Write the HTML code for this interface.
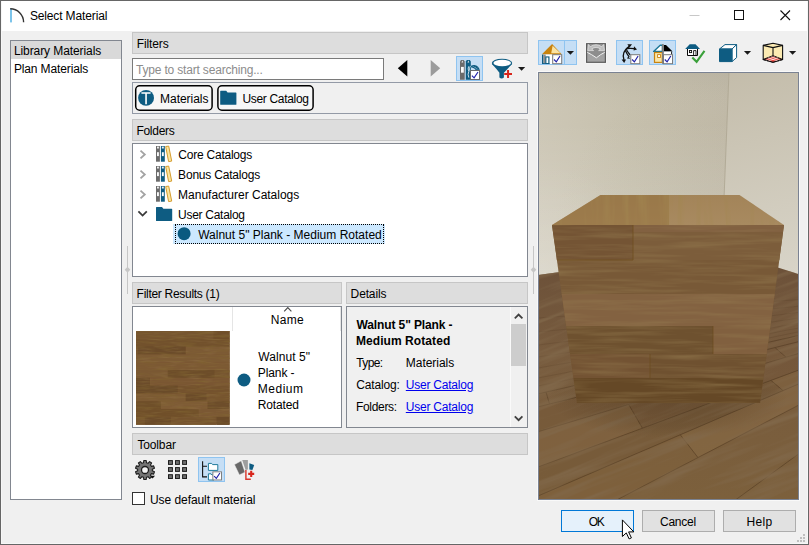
<!DOCTYPE html>
<html lang="en">
<head>
<meta charset="utf-8">
<title>Select Material</title>
<style>
html,body{margin:0;padding:0;}
body{width:809px;height:545px;overflow:hidden;position:relative;background:#f0f0f0;font-family:"Liberation Sans",sans-serif;font-size:12px;color:#000;}
.a{position:absolute;box-sizing:border-box;}
.t{position:absolute;white-space:nowrap;line-height:16px;font-size:12px;}
.hdr{background:#dddddd;border:1px solid #c6c6c6;height:22px;}
.box{background:#fff;border:1px solid #828790;}
.btn{background:#e1e1e1;border:1px solid #adadad;height:22px;width:73px;}
.tog{background:#c5def5;border:1px solid #8fc4f0;}
svg{position:absolute;overflow:visible;}
</style>
</head>
<body>
<!-- title bar -->
<div class="a" style="left:0;top:0;width:809px;height:31px;background:#fff;"></div>
<!-- left list -->
<div class="a box" style="left:10px;top:40px;width:112px;height:460px;"></div>
<div class="a" style="left:11px;top:41px;width:110px;height:18px;background:#d9d9d9;"></div>
<!-- headers -->
<div class="a hdr" style="left:132px;top:32px;width:396px;"></div>
<div class="a hdr" style="left:132px;top:119px;width:396px;"></div>
<div class="a hdr" style="left:132px;top:282px;width:210px;"></div>
<div class="a hdr" style="left:346px;top:282px;width:182px;"></div>
<div class="a hdr" style="left:132px;top:433px;width:396px;"></div>
<!-- search -->
<div class="a" style="left:132px;top:58px;width:252px;height:22px;background:#fff;border:1px solid #7a7a7a;"></div>
<!-- chips panel -->
<div class="a" style="left:132px;top:82px;width:396px;height:32px;border:1px solid #939aa6;"></div>
<!-- tree box -->
<div class="a box" style="left:132px;top:143px;width:396px;height:134px;"></div>
<div class="a" style="left:173px;top:224px;width:211.5px;height:20px;background:#cce8ff;"></div>
<div class="a" style="left:174.5px;top:224px;width:209.5px;height:20px;border:1px dotted #000;"></div>
<!-- results box -->
<div class="a box" style="left:132px;top:306px;width:210px;height:122px;"></div>
<div class="a" style="left:232px;top:307px;width:1px;height:24px;background:#e5e5e5;"></div>
<div class="a" style="left:340px;top:307px;width:1px;height:24px;background:#e5e5e5;"></div>
<!-- details box -->
<div class="a" style="left:346px;top:306px;width:182px;height:122px;border:1px solid #828790;background:#f0f0f0;"></div>
<div class="a" style="left:510px;top:307px;width:1px;height:120px;background:#fafafa;"></div>
<div class="a" style="left:511px;top:324px;width:15px;height:42px;background:#cdcdcd;"></div>
<!-- toggles -->
<div class="a tog" style="left:456px;top:56px;width:27px;height:25px;"></div>
<div class="a tog" style="left:538px;top:40px;width:39px;height:25px;"></div>
<div class="a" style="left:564px;top:40px;width:1px;height:25px;background:#8fc4f0;"></div>
<div class="a tog" style="left:616px;top:40px;width:27px;height:25px;"></div>
<div class="a tog" style="left:649px;top:40px;width:27px;height:25px;"></div>
<div class="a tog" style="left:198px;top:457px;width:27px;height:25px;"></div>
<!-- checkbox -->
<div class="a" style="left:132px;top:492px;width:13px;height:13px;background:#fff;border:1px solid #333;"></div>
<!-- buttons -->
<div class="a btn" style="left:561px;top:510px;background:#e5f1fb;border-color:#0078d7;"></div>
<div class="a btn" style="left:642px;top:510px;"></div>
<div class="a btn" style="left:723px;top:510px;"></div>
<!-- preview -->
<svg style="left:537px;top:71px;" width="263" height="430" viewBox="537 71 263 430">
<rect x="537.5" y="71.5" width="262" height="429" fill="none" stroke="#f9f9f9" stroke-width="1"/>
<svg x="538" y="72" width="261" height="428" viewBox="538 72 261 428" style="overflow:hidden">
<defs>
<linearGradient id="lw" gradientUnits="userSpaceOnUse" x1="538" y1="0" x2="728" y2="0">
<stop offset="0" stop-color="#cdc7b6"/><stop offset="0.5" stop-color="#c6c0ad"/><stop offset="1" stop-color="#c1baa8"/>
</linearGradient>
<radialGradient id="lwd" gradientUnits="userSpaceOnUse" cx="715" cy="240" r="165">
<stop offset="0" stop-color="#8c8468" stop-opacity="0.08"/><stop offset="1" stop-color="#8c8468" stop-opacity="0"/>
</radialGradient>
<radialGradient id="lwl" gradientUnits="userSpaceOnUse" cx="538" cy="280" r="120">
<stop offset="0" stop-color="#ffffff" stop-opacity="0.12"/><stop offset="1" stop-color="#ffffff" stop-opacity="0"/>
</radialGradient>
<linearGradient id="rw" gradientUnits="userSpaceOnUse" x1="740" y1="72" x2="790" y2="275">
<stop offset="0" stop-color="#c4bdab"/><stop offset="1" stop-color="#d8d4c8"/>
</linearGradient>
<linearGradient id="fl" gradientUnits="userSpaceOnUse" x1="0" y1="250" x2="0" y2="500">
<stop offset="0" stop-color="#6a4f38"/><stop offset="0.4" stop-color="#775b3e"/><stop offset="1" stop-color="#7c603c"/>
</linearGradient>
<linearGradient id="tf" gradientUnits="userSpaceOnUse" x1="0" y1="195" x2="0" y2="225">
<stop offset="0" stop-color="#a38459"/><stop offset="1" stop-color="#a88a60"/>
</linearGradient>
<clipPath id="cf"><polygon points="552,225 784,225 760,403 577,403"/></clipPath>
<clipPath id="cfl"><polygon points="538,275 722,250 800,274.5 800,500 538,500"/></clipPath>
<radialGradient id="sh" gradientUnits="userSpaceOnUse" cx="668" cy="398" r="120" gradientTransform="translate(0 265.3) scale(1 0.3333)">
<stop offset="0" stop-color="#2a1a08" stop-opacity="0.22"/><stop offset="0.7" stop-color="#2a1a08" stop-opacity="0.1"/><stop offset="1" stop-color="#2a1a08" stop-opacity="0"/>
</radialGradient>
<filter id="gh" x="0" y="0" width="100%" height="100%"><feTurbulence type="fractalNoise" baseFrequency="0.012 0.2" numOctaves="3" seed="7"/><feColorMatrix type="matrix" values="0 0 0 0 0.3  0 0 0 0 0.2  0 0 0 0 0.08  1.2 0 0 0 -0.5"/></filter>
<filter id="gl" x="0" y="0" width="100%" height="100%"><feTurbulence type="fractalNoise" baseFrequency="0.01 0.16" numOctaves="2" seed="23"/><feColorMatrix type="matrix" values="0 0 0 0 0.78  0 0 0 0 0.62  0 0 0 0 0.36  2 0 0 0 -0.95"/></filter>
<filter id="gv" x="0" y="0" width="100%" height="100%"><feTurbulence type="fractalNoise" baseFrequency="0.16 0.012" numOctaves="3" seed="11"/><feColorMatrix type="matrix" values="0 0 0 0 0.36  0 0 0 0 0.24  0 0 0 0 0.08  1.4 0 0 0 -0.62"/></filter>
<filter id="gf" x="0" y="0" width="100%" height="100%"><feTurbulence type="fractalNoise" baseFrequency="0.01 0.14" numOctaves="3" seed="5"/><feColorMatrix type="matrix" values="0 0 0 0 0.22  0 0 0 0 0.14  0 0 0 0 0.07  2.4 0 0 0 -1.12"/></filter>
<clipPath id="ct"><polygon points="600.5,195 739.5,195 784,225 552,225"/></clipPath>
<linearGradient id="lwv" gradientUnits="userSpaceOnUse" x1="0" y1="72" x2="0" y2="275">
<stop offset="0" stop-color="#000" stop-opacity="0.035"/><stop offset="0.25" stop-color="#fff" stop-opacity="0"/><stop offset="1" stop-color="#fff" stop-opacity="0.24"/>
</linearGradient>
</defs>
<rect x="538" y="72" width="262" height="428" fill="#c6c0ae"/>
<polygon points="538,72 729,72 722,250 538,275" fill="url(#lw)"/>
<polygon points="538,72 729,72 722,250 538,275" fill="url(#lwd)"/>
<polygon points="538,72 729,72 722,250 538,275" fill="url(#lwl)"/>
<polygon points="538,72 729,72 722,250 538,275" fill="url(#lwv)"/>
<polygon points="729,72 800,72 800,274.5 722,250" fill="url(#rw)"/>
<line x1="729" y1="72" x2="722" y2="250" stroke="#aca590" stroke-width="0.8"/>
<!-- floor -->
<g clip-path="url(#cfl)">
<rect x="538" y="245" width="262" height="255" fill="url(#fl)"/>
<polygon points="538,431.8 628.7,404.5 642.4,428.2 538,467.0" fill="#8b6b43" opacity="0.28"/>
<polygon points="628.7,404.5 800,353.0 800,369.6 642.4,428.2" fill="#5f4528" opacity="0.12"/>
<polygon points="538,467.0 771,380.4 783,390.6 538,496.0" fill="#6a4d2e" opacity="0.18"/>
<polygon points="771,380.4 800,369.6 800,383.3 783,390.6" fill="#8b6b43" opacity="0.25"/>
<polygon points="538,496.0 680.3,434.8 698,457.6 538,541.0" fill="#85653d" opacity="0.2"/>
<polygon points="680.3,434.8 800,383.3 800,404.4 698,457.6" fill="#90704a" opacity="0.38"/>
<polygon points="538,406.9 775,347.6 786,357.2 538,431.8" fill="#694c2d" opacity="0.15"/>
<g fill="none" stroke="#46301a" stroke-width="0.9" opacity="0.5">
<path d="M538,393.8 L800,335.2"/>
<path d="M538,406.9 L800,341.3"/>
<path d="M538,431.8 L800,353.0"/>
<path d="M538,467.0 L800,369.6"/>
<path d="M538,496.0 L800,383.3"/>
<path d="M538,541.0 L800,404.4"/>
<path d="M538,644.0 L800,452.9"/>
<path d="M628.7,404.5 L642.4,428.2"/>
<path d="M680.3,434.8 L698,457.6"/>
<path d="M546,392.0 L549.5,404.0"/>
<path d="M771,380.4 L783,390.6"/>
<path d="M775,347.6 L786,357.2"/>
</g>
<g fill="none" stroke="#46301a" stroke-width="0.8" opacity="0.22">
<path d="M538,318.0 L800,299.5"/>
<path d="M538,332.0 L800,306.1"/>
<path d="M538,345.0 L800,312.2"/>
<path d="M538,357.0 L800,317.8"/>
<path d="M538,368.0 L800,323.0"/>
<path d="M538,378.0 L800,327.7"/>
<path d="M538,386.0 L800,331.5"/>
</g>
<g transform="rotate(-21 668 400)"><rect x="400" y="150" width="560" height="520" filter="url(#gf)"/></g>
<ellipse cx="668" cy="398" rx="120" ry="40" fill="url(#sh)"/>
</g>
<!-- cube top -->
<polygon points="600.5,195 739.5,195 784,225 552,225" fill="url(#tf)"/>
<polygon points="600.5,195 669,195 669,225 552,225" fill="#94713f" opacity="0.6"/>
<g clip-path="url(#ct)"><rect x="550" y="194" width="236" height="32" filter="url(#gv)"/></g>
<!-- cube front -->
<g clip-path="url(#cf)">
<rect x="550" y="225" width="236" height="180" fill="#785937"/>
<rect x="550" y="225" width="83" height="35" fill="#745434"/>
<rect x="633" y="225" width="153" height="7" fill="#826141"/>
<rect x="633" y="232" width="153" height="28" fill="#7c5d3b"/>
<rect x="550" y="294" width="236" height="32" fill="#836241"/>
<rect x="550" y="326" width="163" height="28" fill="#6e512f"/>
<rect x="713" y="326" width="80" height="28" fill="#81603f"/>
<rect x="550" y="354" width="100" height="24" fill="#735333"/>
<rect x="650" y="354" width="140" height="24" fill="#6f5130"/>
<rect x="550" y="378" width="236" height="26" fill="#654826"/>
<rect x="550" y="225" width="236" height="180" filter="url(#gh)"/>
<path d="M633 225V260H552" fill="none" stroke="#6f4f1e" stroke-width="0.8"/>
<path d="M713 326V354M650 354V378" fill="none" stroke="#6a4b1c" stroke-width="0.7"/>
</g>
<rect x="538.5" y="72.5" width="260" height="427" fill="none" stroke="#7a8292" stroke-width="1"/>
</svg>
</svg>

<!-- thumb -->
<svg style="left:136.2px;top:331.2px;" width="93.6" height="93.6" viewBox="0 0 94 94">
<defs><filter id="gr" x="0" y="0" width="100%" height="100%"><feTurbulence type="fractalNoise" baseFrequency="0.05 0.6" numOctaves="3" seed="4"/><feColorMatrix type="matrix" values="0 0 0 0 0.22  0 0 0 0 0.13  0 0 0 0 0.03  1.5 0 0 0 -0.66"/></filter>
<filter id="gr2" x="0" y="0" width="100%" height="100%"><feTurbulence type="fractalNoise" baseFrequency="0.06 0.5" numOctaves="2" seed="19"/><feColorMatrix type="matrix" values="0 0 0 0 0.66  0 0 0 0 0.5  0 0 0 0 0.25  2 0 0 0 -1"/></filter></defs>
<rect width="94" height="94" fill="#75532e"/>
<rect x="0" y="0.00" width="78" height="8.13" fill="#76552f"/>
<rect x="78" y="0.00" width="16" height="8.13" fill="#704f29"/>
<rect x="0" y="7.83" width="94" height="8.13" fill="#72512c"/>
<rect x="2" y="15.67" width="48" height="8.13" fill="#6a4a29"/>
<rect x="50" y="15.67" width="44" height="8.13" fill="#7c5a34"/>
<rect x="0" y="23.50" width="94" height="8.13" fill="#7c5a34"/>
<rect x="0" y="31.33" width="94" height="8.13" fill="#7c5933"/>
<rect x="0" y="39.17" width="32" height="8.13" fill="#7a5833"/>
<rect x="32" y="39.17" width="47" height="8.13" fill="#6d4d29"/>
<rect x="79" y="39.17" width="15" height="8.13" fill="#75542e"/>
<rect x="0" y="47.00" width="14" height="8.13" fill="#6a4a29"/>
<rect x="14" y="47.00" width="80" height="8.13" fill="#7a5632"/>
<rect x="0" y="54.83" width="42" height="8.13" fill="#6a4b29"/>
<rect x="42" y="54.83" width="52" height="8.13" fill="#74522d"/>
<rect x="0" y="62.67" width="50" height="8.13" fill="#7c5a33"/>
<rect x="50" y="62.67" width="21" height="8.13" fill="#6b4b29"/>
<rect x="71" y="62.67" width="23" height="8.13" fill="#76542e"/>
<rect x="0" y="70.50" width="25" height="8.13" fill="#6f4f29"/>
<rect x="25" y="70.50" width="47" height="8.13" fill="#7e5b35"/>
<rect x="72" y="70.50" width="22" height="8.13" fill="#6d4d2a"/>
<rect x="0" y="78.33" width="63" height="8.13" fill="#704f29"/>
<rect x="63" y="78.33" width="31" height="8.13" fill="#7b5833"/>
<rect x="0" y="86.17" width="9" height="8.13" fill="#74522d"/>
<rect x="9" y="86.17" width="26" height="8.13" fill="#6b4b29"/>
<rect x="35" y="86.17" width="46" height="8.13" fill="#75532e"/>
<rect x="81" y="86.17" width="13" height="8.13" fill="#6a4a28"/>
<rect width="94" height="94" filter="url(#gr)"/>
<rect width="94" height="94" filter="url(#gr2)" opacity="0.15"/>
</svg>
<!-- icons -->
<svg style="left:0;top:0;" width="809" height="545" viewBox="0 0 809 545">
<defs>
<g id="chk"><rect x="0.5" y="0.5" width="9" height="9" fill="#fff" stroke="#7a7a7a" stroke-width="1"/><path d="M1.8 5.3 L4.1 7.7 L7.8 1.8" fill="none" stroke="#2020a8" stroke-width="1.15"/></g>
<path id="dd" d="M0 0H7.2L3.6 3.8Z" fill="#1a1a1a"/>
<g id="books">
<rect x="0" y="0" width="3.9" height="15.7" fill="#6b6b6b"/><rect x="1" y="0.6" width="1.9" height="1.9" fill="#f0f0f0"/><rect x="1" y="6.2" width="1.9" height="3.9" fill="#fafafa"/>
<rect x="4.9" y="0" width="3.9" height="15.7" fill="#0e5c82"/><rect x="5.9" y="0.6" width="1.9" height="1.9" fill="#f0f0f0"/><rect x="5.9" y="6.2" width="1.9" height="3.9" fill="#fafafa"/>
<path d="M9.7 0.5 L12.7 0.1 L15.7 15.1 L12.6 15.6 Z" fill="#fbe7a2" stroke="#d59c2e" stroke-width="1"/>
</g>
<path id="folder" d="M0 0.6 Q0 0 0.6 0 H6 L7.4 1.7 H15.6 Q16.2 1.7 16.2 2.3 V13.4 Q16.2 14 15.6 14 H0.6 Q0 14 0 13.4 Z" fill="#0e5c82"/>
</defs>
<!-- title icon -->
<rect x="10" y="8.6" width="2" height="13.8" fill="#7cc4ea"/>
<path d="M10.2 8.8 A13.4 13.4 0 0 1 23.6 22.2" fill="none" stroke="#333" stroke-width="1.4"/>
<!-- window controls -->
<path d="M689.5 15.5H699.5" stroke="#c8c8c8" stroke-width="1"/>
<rect x="734.5" y="10.5" width="9" height="9" fill="none" stroke="#111" stroke-width="1"/>
<path d="M780.5 10.5L790 20M790 10.5L780.5 20" stroke="#111" stroke-width="1.1" fill="none"/>
<!-- nav arrows -->
<path d="M407.3 60V76.4L397.8 68.2Z" fill="#000"/>
<path d="M430.7 60V76.4L440.2 68.2Z" fill="#9b9b9b"/>
<!-- catalogs toggle icon -->
<g>
<path d="M460 61.6 L461 60 H463.7 L464.7 61.6 V79.8 H460Z" fill="#6b6b6b"/>
<path d="M461.5 62.6 L462.35 60.5 L463.2 62.6Z" fill="#f4f4f4"/>
<rect x="461" y="66.9" width="2.8" height="5.8" fill="#fafafa"/>
<path d="M465.8 61.6 L466.8 60 H469.8 L470.8 61.6 V79.8 H465.8Z" fill="#0e5c82"/>
<path d="M467.5 62.6 L468.35 60.5 L469.2 62.6Z" fill="#f4f4f4"/>
<g fill="none" stroke="#0e5c82" stroke-width="1.1">
<path d="M469.6 68.6 Q471 65.6 474 65.6 Q478.6 66 479.4 71"/>
<path d="M471.4 66.6 Q475 67.4 477 70.4"/>
<path d="M473.6 65.8 Q476.6 66.6 478.4 70.2"/>
</g>
<path d="M468.6 66.4 Q467.6 69 468.8 71.4 Q467.4 74.4 468.8 77.6" fill="none" stroke="#dcebf4" stroke-width="0.9"/>
<path d="M470.4 66 L469.2 69 L470.6 72" fill="none" stroke="#dcebf4" stroke-width="0.8"/>
<g transform="translate(470 70)"><rect x="0.5" y="0.5" width="9" height="9" fill="#fff" stroke="#6a6a6a" stroke-width="1"/><path d="M1.9 5.6 L4.1 7.8 L8 2" fill="none" stroke="#2020a8" stroke-width="1.15"/></g>
</g>
<!-- funnel -->
<path d="M492 64 Q497 69.4 499.4 72.8 V77.6 Q501.6 79.3 503.9 77.6 V72.8 Q507 69.4 512 64 Z" fill="#0e5c82"/>
<ellipse cx="502" cy="63" rx="10.2" ry="4.3" fill="#0e5c82"/>
<ellipse cx="502.2" cy="63" rx="8.8" ry="3.2" fill="#fff"/>
<path d="M504.2 73.9H512M508.05 69.9V77.9" stroke="#d8261c" stroke-width="2" fill="none"/>
<use href="#dd" x="518" y="67"/>
<!-- chips icons -->
<rect x="135.7" y="85.8" width="76.4" height="24.4" rx="4" fill="#f7f7f7" stroke="#000" stroke-width="1.5"/>
<rect x="217.9" y="85.8" width="95.2" height="24.4" rx="4" fill="#f7f7f7" stroke="#000" stroke-width="1.5"/>
<circle cx="146.05" cy="97.9" r="7.95" fill="#0e5c82"/>
<path d="M141.4 93H150.6M146.05 93V104.2" stroke="#fff" stroke-width="1.6" fill="none"/>
<use href="#folder" x="220.2" y="90.8"/>
<!-- tree -->
<g fill="none" stroke="#a3a3a3" stroke-width="1.8">
<path d="M140.5 150.7L144.8 154.5L140.5 158.3"/>
<path d="M140.5 170.7L144.8 174.5L140.5 178.3"/>
<path d="M140.5 190.7L144.8 194.5L140.5 198.3"/>
</g>
<path d="M138.4 211.4L142.6 215.6L146.8 211.4" fill="none" stroke="#3a3a3a" stroke-width="1.8"/>
<use href="#books" x="156" y="146"/>
<use href="#books" x="156" y="166"/>
<use href="#books" x="156" y="186"/>
<use href="#folder" x="156" y="207"/>
<circle cx="184.1" cy="233.7" r="6.5" fill="#0a5a80"/>
<!-- results -->
<path d="M284.2 311.3L287.8 307.7L291.4 311.3" fill="none" stroke="#4a4a4a" stroke-width="1.2"/>
<circle cx="244" cy="380" r="6.5" fill="#0e5c82"/>
<!-- scrollbar arrows -->
<path d="M514.8 318.4L518.6 314.6L522.4 318.4" fill="none" stroke="#404040" stroke-width="1.8"/>
<path d="M514.8 416.4L518.6 420.2L522.4 416.4" fill="none" stroke="#404040" stroke-width="1.8"/>
<!-- splitters -->
<g fill="#c6c6c6">
<rect x="127" y="246" width="1" height="48"/><path d="M127.5 266.8L130.3 269.8L127.5 272.8L124.7 269.8Z"/>
<rect x="533" y="246" width="1" height="48"/><path d="M533.5 266.8L536.3 269.8L533.5 272.8L530.7 269.8Z"/>
</g>
<!-- right toolbar -->
<!-- house toggle -->
<g>
<path d="M541.7 54.5 L552.1 44 L562 54.5Z" fill="#c8830f"/>
<path d="M552.6 45.7 L560.5 53.3 H551.2Z" fill="#fbe3a2"/>
<rect x="542" y="54.5" width="10.3" height="9.4" fill="#fff"/>
<rect x="542" y="54.5" width="1.5" height="9.4" fill="#0e5c82"/>
<rect x="543.5" y="54.5" width="2.2" height="8.5" fill="#8a8a8a"/>
<rect x="545.3" y="56.4" width="4.2" height="7.5" fill="#0e5c82"/>
<rect x="546.4" y="57.5" width="1.9" height="5.6" fill="#fff"/>
<rect x="542" y="63" width="7.5" height="0.9" fill="#0e5c82"/>
<use href="#chk" transform="translate(552.2 54.2)"/>
<use href="#dd" x="566.8" y="51"/>
</g>
<!-- gray disabled -->
<g>
<rect x="585.4" y="42.5" width="21.2" height="20.9" fill="#f8f8f8"/>
<rect x="586.6" y="43.7" width="18.8" height="18.6" fill="#a3a3a3" stroke="#5c5c5c" stroke-width="1.2"/>
<path d="M587.2 44.3 H604.8 V52.4 Q601 54 596.4 57.8 Q591 54 587.2 52.4Z" fill="#8d8d8d"/>
<path d="M588.5 44.5 L587.7 50.6 H593.6 L591.7 49 Q596 45.8 600.5 49 L598.6 50.6 H604.5 L603.6 44.5 L601.8 46.7 Q596 42.8 590.2 46.7 Z" fill="#bdbdbd" stroke="#e6e6e6" stroke-width="0.7" stroke-linejoin="round"/>
<path d="M587.3 52.4 Q591 54 596.4 57.8 Q601 54 604.7 52.4" fill="none" stroke="#f2f2f2" stroke-width="1"/>
</g>
<!-- arrows toggle -->
<g fill="none" stroke="#111" stroke-width="1.3">
<path d="M629.2 46.6 Q621 52 624 60"/>
<path d="M626.6 48.6 Q630 48 634.4 48.6"/>
<path d="M625.4 50.6 Q627 54.4 629.2 57"/>
<path d="M626.6 50 Q628.4 53 630.2 55"/>
<path d="M626 49.6 Q627.2 47.4 629.6 46.4"/>
</g>
<g fill="#111">
<path d="M627.4 44.3H632L629.6 47.4Z"/>
<path d="M634 46.2L637 49.4L633.6 50.4Z"/>
<path d="M621.6 59.6H626L624.2 63.1Z"/>
<path d="M628.2 56.4L630.2 58.8L627 58.6Z"/>
</g>
<use href="#chk" transform="translate(630.3 54.2)"/>
<!-- half house toggle -->
<g>
<path d="M653.6 51.4 L660.2 45.3 H662.4 V51.4Z" fill="#fff" stroke="#1a7596" stroke-width="1.4" stroke-linejoin="round"/>
<rect x="654.5" y="52.5" width="7.8" height="9.9" fill="#fbe6a8" stroke="#c8830f" stroke-width="1.2"/>
<rect x="657.6" y="54.6" width="2.9" height="2.9" fill="#fff" stroke="#c8830f" stroke-width="0.9"/>
<path d="M663.8 44.9 H666 L672.6 51.6 H663.8Z" fill="#000"/>
<rect x="663.8" y="51.6" width="7.6" height="3" fill="#fff"/>
<path d="M671.6 51.6V54.6" stroke="#222" stroke-width="1"/>
<rect x="662" y="44.1" width="1.8" height="19.7" fill="#7c7c7c"/>
<use href="#chk" transform="translate(663 54.2)"/>
</g>
<!-- house check -->
<g>
<path d="M687.5 48.6 V55.5 H697.5 V48.6" fill="#fff" stroke="#0a0a0a" stroke-width="1"/>
<path d="M685.2 49 L689.7 44.2 H695.5 L700 49Z" fill="#0e5c82"/>
<rect x="689.5" y="50.5" width="2.1" height="2.1" fill="#fff" stroke="#0a0a0a" stroke-width="0.9"/>
<path d="M693.6 55.4V50.6H696V55.4" fill="none" stroke="#0a0a0a" stroke-width="0.9"/>
<path d="M692.3 57.6 L696.6 61.8 L704.5 50.8" fill="none" stroke="#3aa03a" stroke-width="2.1"/>
</g>
<!-- cube -->
<g stroke="#0e5c82" stroke-width="1" stroke-linejoin="round">
<path d="M719.5 49 L725 44.6 H736.6 L732 49Z" fill="#fff"/>
<path d="M732 49 L736.6 44.6 V57.6 L732 61.6Z" fill="#fff"/>
<rect x="719.5" y="49" width="12.4" height="12.6" fill="#0e5c82"/>
</g>
<use href="#dd" x="743.9" y="51"/>
<!-- room box -->
<g stroke="#111" stroke-width="1.1" stroke-linejoin="round">
<path d="M763.2 45.4 L773 43.2 L782.6 45.4 V59.4 L773 62.3 L763.2 59.4Z" fill="#fbeab2"/>
<path d="M763.2 59.4 L773 55.7 L782.6 59.4 L773 62.3Z" fill="#e5443c"/>
<path d="M763.2 45.4 L773 47.6 L782.6 45.4 M773 47.6 V55.7" fill="none"/>
</g>
<path d="M768 57.8 L777.6 60.9 M778 57.8 L768.4 60.9" stroke="#fff" stroke-width="0.7" fill="none" opacity="0.9"/>
<path d="M771 56.6 L780.2 60.2 M775 56.6 L765.8 60.2" stroke="#fff" stroke-width="0.6" fill="none" opacity="0.8"/>
<use href="#dd" x="789" y="51"/>
<!-- bottom toolbar -->
<!-- gear -->
<g transform="translate(145 470)">
<path d="M-1.47 -7.25 L-1.24 -9.52 L1.24 -9.52 L1.47 -7.25 L3.07 -6.73 L4.59 -8.43 L6.60 -6.97 L5.45 -5.00 L6.44 -3.64 L8.67 -4.13 L9.44 -1.76 L7.35 -0.84 L7.35 0.84 L9.44 1.76 L8.67 4.13 L6.44 3.64 L5.45 5.00 L6.60 6.97 L4.59 8.43 L3.07 6.73 L1.47 7.25 L1.24 9.52 L-1.24 9.52 L-1.47 7.25 L-3.07 6.73 L-4.59 8.43 L-6.60 6.97 L-5.45 5.00 L-6.44 3.64 L-8.67 4.13 L-9.44 1.76 L-7.35 0.84 L-7.35 -0.84 L-9.44 -1.76 L-8.67 -4.13 L-6.44 -3.64 L-5.45 -5.00 L-6.60 -6.97 L-4.59 -8.43 L-3.07 -6.73Z" fill="#757575" stroke="#1e1e1e" stroke-width="1.1" stroke-linejoin="round"/>
<circle r="3.5" fill="#f4f4f4" stroke="#1e1e1e" stroke-width="1.3"/>
<path d="M5.2 5.8H10L7.6 8.6Z" fill="#111"/>
</g>
<!-- grid -->
<g fill="#6e6e6e" stroke="#1e1e1e" stroke-width="1">
<rect x="168.5" y="460.6" width="3.9" height="3.8"/><rect x="175.5" y="460.6" width="3.9" height="3.8"/><rect x="182.6" y="460.6" width="3.9" height="3.8"/>
<rect x="168.5" y="467.6" width="3.9" height="3.8"/><rect x="175.5" y="467.6" width="3.9" height="3.8"/><rect x="182.6" y="467.6" width="3.9" height="3.8"/>
<rect x="168.5" y="474.7" width="3.9" height="3.8"/><rect x="175.5" y="474.7" width="3.9" height="3.8"/><rect x="182.6" y="474.7" width="3.9" height="3.8"/>
</g>
<!-- tree toggle icon -->
<path d="M202.6 461.2V476.9H207M202.6 466.3H207" fill="none" stroke="#111" stroke-width="1.1"/>
<path d="M208.4 463.4 H211.6 L212.6 464.6 H217.8 V470.4 H208.4Z" fill="#fff" stroke="#1e7a9c" stroke-width="1"/>
<path d="M208.4 473.8 H211 L212 475 H214 V480 H208.4Z" fill="#fff" stroke="#1e7a9c" stroke-width="1"/>
<g transform="translate(212.4 471.4) scale(0.96 0.9)"><use href="#chk"/></g>
<!-- cards -->
<path d="M242.2 460 H247.9 V469.4 L245.6 470Z" fill="#9e9e9e"/>
<path d="M234.4 464.6 L241.2 460.8 L245 472.2 L239.4 474.9Z" fill="#686868" stroke="#f6f6f6" stroke-width="0.5"/>
<path d="M249.4 463.3 L254.2 465 L252.4 470 L249.4 469.4Z" fill="#0e5c82"/>
<path d="M245.9 470V479.2H250.8" fill="none" stroke="#d8352a" stroke-width="1.4"/>
<path d="M248.2 473.9H254.2M251.2 470.8V476.9" fill="none" stroke="#d8261c" stroke-width="2.1"/>
<!-- resize grip -->
<g fill="#bfbfbf">
<rect x="803" y="534" width="2" height="2"/><rect x="800" y="537" width="2" height="2"/><rect x="803" y="537" width="2" height="2"/>
<rect x="797" y="540" width="2" height="2"/><rect x="800" y="540" width="2" height="2"/><rect x="803" y="540" width="2" height="2"/>
</g>
<!-- cursor -->
<path transform="translate(622.4 519.9)" d="M0 0 L0 16.6 L3.9 13 L6.7 19 L9 18 L6.2 12 L11.4 12 Z" fill="#fff" stroke="#000" stroke-width="1" stroke-linejoin="miter"/>
</svg>

<!-- text -->
<span class="t" style="left:29.88px;top:7.84px;letter-spacing:-0.134px;">Select Material</span>
<span class="t" style="left:13.91px;top:42.84px;letter-spacing:-0.085px;">Library Materials</span>
<span class="t" style="left:13.91px;top:60.84px;letter-spacing:-0.130px;">Plan Materials</span>
<span class="t" style="left:136.81px;top:35.84px;letter-spacing:-0.138px;">Filters</span>
<span class="t" style="left:136.04px;top:61.94px;letter-spacing:-0.183px;color:#8c8c8c;">Type to start searching...</span>
<span class="t" style="left:160.11px;top:90.84px;letter-spacing:-0.043px;">Materials</span>
<span class="t" style="left:242.41px;top:90.84px;letter-spacing:-0.316px;">User Catalog</span>
<span class="t" style="left:136.41px;top:122.84px;letter-spacing:-0.278px;">Folders</span>
<span class="t" style="left:178.33px;top:146.84px;letter-spacing:-0.233px;">Core Catalogs</span>
<span class="t" style="left:178.11px;top:166.84px;letter-spacing:-0.199px;">Bonus Catalogs</span>
<span class="t" style="left:178.11px;top:186.84px;letter-spacing:-0.013px;">Manufacturer Catalogs</span>
<span class="t" style="left:178.11px;top:206.84px;letter-spacing:-0.289px;">User Catalog</span>
<span class="t" style="left:198.17px;top:226.84px;letter-spacing:0.012px;">Walnut 5" Plank - Medium Rotated</span>
<span class="t" style="left:136.61px;top:285.84px;letter-spacing:-0.293px;">Filter Results (1)</span>
<span class="t" style="left:350.61px;top:285.84px;letter-spacing:-0.140px;">Details</span>
<span class="t" style="left:270.81px;top:311.84px;letter-spacing:0.297px;">Name</span>
<span class="t" style="left:258.27px;top:348.84px;letter-spacing:0.083px;">Walnut 5"</span>
<span class="t" style="left:257.71px;top:364.84px;letter-spacing:-0.076px;">Plank -</span>
<span class="t" style="left:257.71px;top:380.84px;letter-spacing:0.535px;">Medium</span>
<span class="t" style="left:257.71px;top:396.84px;letter-spacing:-0.130px;">Rotated</span>
<span class="t" style="left:356.47px;top:316.84px;font-weight:bold;letter-spacing:-0.111px;">Walnut 5" Plank -</span>
<span class="t" style="left:355.91px;top:332.84px;font-weight:bold;letter-spacing:0.077px;">Medium Rotated</span>
<span class="t" style="left:356.34px;top:354.84px;letter-spacing:-0.634px;">Type:</span>
<span class="t" style="left:356.13px;top:376.84px;letter-spacing:-0.125px;">Catalog:</span>
<span class="t" style="left:355.91px;top:398.84px;letter-spacing:-0.302px;">Folders:</span>
<span class="t" style="left:405.81px;top:354.84px;letter-spacing:-0.043px;">Materials</span>
<span class="t" style="left:405.81px;top:376.84px;letter-spacing:-0.226px;color:#0000ee;text-decoration:underline;">User Catalog</span>
<span class="t" style="left:405.81px;top:398.84px;letter-spacing:-0.226px;color:#0000ee;text-decoration:underline;">User Catalog</span>
<span class="t" style="left:137.44px;top:436.84px;letter-spacing:-0.146px;">Toolbar</span>
<span class="t" style="left:150.01px;top:491.84px;letter-spacing:-0.066px;">Use default material</span>
<span class="t" style="left:588.86px;top:513.84px;letter-spacing:-1.324px;">OK</span>
<span class="t" style="left:660.03px;top:513.84px;letter-spacing:-0.263px;">Cancel</span>
<span class="t" style="left:746.61px;top:513.84px;letter-spacing:0.267px;">Help</span>
<!-- window border -->
<div class="a" style="left:1px;top:1px;width:807px;height:543px;border:1px solid #f7f7f7;border-top:none;pointer-events:none;"></div>
<div class="a" style="left:0;top:0;width:809px;height:545px;border:1px solid #666;pointer-events:none;"></div>
</body>
</html>
